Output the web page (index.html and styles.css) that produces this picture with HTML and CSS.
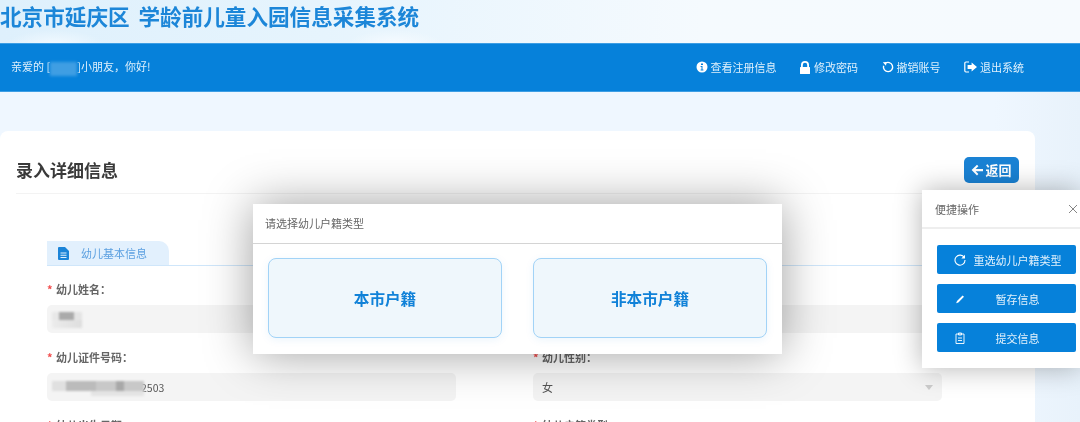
FILE: index.html
```html
<!DOCTYPE html>
<html lang="zh-CN">
<head>
<meta charset="utf-8">
<title>北京市延庆区 学龄前儿童入园信息采集系统</title>
<link rel="stylesheet" href="styles.css">
</head>
<body>
<div class="page">
  <header class="banner">
    <h1 class="banner-title">北京市延庆区 学龄前儿童入园信息采集系统</h1>
  </header>
  <nav class="bar">
    <div class="greeting">亲爱的 [<span class="mask mask-greeting"></span>]小朋友，你好!</div>
    <div class="bar-links">
      <a class="bar-link"><svg class="icon-12" viewBox="0 0 12 12"><path fill="#fff" fill-rule="evenodd" d="M6 .5a5.5 5.5 0 1 1 0 11 5.5 5.5 0 0 1 0-11zM5 2.400v1.600h2V2.400zM4.600 5v1h.9v2.400h-.9v1h2.800v-1h-.9V5z"/></svg>查看注册信息</a>
      <a class="bar-link bar-link-wide"><svg class="icon-10" viewBox="0 0 10 13"><path fill="#fff" d="M1 6V4a4 4 0 0 1 8 0v2h.4a.6.6 0 0 1 .6.6v5.800a.6.6 0 0 1-.6.6H.6a.6.6 0 0 1-.6-.6V6.600A.6.6 0 0 1 .6 6zm1.800 0h4.400V4a2.200 2.200 0 0 0-4.400 0z"/></svg>修改密码</a>
      <a class="bar-link"><svg class="icon-12" viewBox="0 0 12 12"><path fill="none" stroke="#fff" stroke-width="1.400" d="M3.200 2.400a4.600 4.600 0 1 1-1.600 2.400"/><path fill="#fff" d="M.8 1.200 4.600 1 4 4.800z"/></svg>撤销账号</a>
      <a class="bar-link"><svg class="icon-13" viewBox="0 0 13 12"><path fill="none" stroke="#fff" stroke-width="1.200" d="M5 1H2a1.200 1.200 0 0 0-1.200 1.200v7.600A1.200 1.200 0 0 0 2 11h3"/><path fill="#fff" d="M7.600 1.600 13 6l-5.400 4.400V8H3.600V4h4z"/></svg>退出系统</a>
    </div>
  </nav>
  <main class="content">
    <section class="card">
      <div class="card-head">
        <h2 class="card-title">录入详细信息</h2>
        <button class="back-btn"><svg class="back-icon" viewBox="0 0 12 12"><path fill="#fff" d="M6 .8 7.400 2.200 4.600 5H12v2.200H4.600l2.800 2.800L6 11.400.6 6z"/></svg>返回</button>
      </div>
      <div class="tabs">
        <div class="tab"><svg class="tab-icon" viewBox="0 0 11 13"><path fill="#1b84d8" fill-rule="evenodd" d="M1 0h6l4 4v8a1 1 0 0 1-1 1H1a1 1 0 0 1-1-1V1a1 1 0 0 1 1-1zm1.500 5.500v1h6v-1zm0 2.200v1h6v-1zm0 2.200v1h6v-1z"/></svg>幼儿基本信息</div>
      </div>
      <div class="form">
        <div class="field">
          <label class="label">幼儿姓名：</label>
          <div class="input"><span class="mask mask-name"></span></div>
        </div>
        <div class="field">
          <label class="label label-empty"></label>
          <div class="input"></div>
        </div>
        <div class="field">
          <label class="label">幼儿证件号码：</label>
          <div class="input input-id"><span class="mask mask-id"></span>2503</div>
        </div>
        <div class="field">
          <label class="label">幼儿性别：</label>
          <div class="input input-select">女<span class="caret"></span></div>
        </div>
        <div class="field">
          <label class="label">幼儿出生日期</label>
        </div>
        <div class="field">
          <label class="label">幼儿户籍类型</label>
        </div>
      </div>
    </section>
  </main>

  <div class="dialog">
    <div class="dialog-head">请选择幼儿户籍类型</div>
    <div class="dialog-body">
      <div class="choice">本市户籍</div>
      <div class="choice">非本市户籍</div>
    </div>
  </div>

  <aside class="quick">
    <div class="quick-head">便捷操作<svg class="quick-close" viewBox="0 0 10 10"><path fill="none" stroke="#777" stroke-width=".9" d="M1 1l8 8M9 1l-8 8"/></svg></div>
    <div class="quick-body">
      <button class="quick-btn"><svg class="quick-icon" viewBox="0 0 12 12"><path fill="none" stroke="#fff" stroke-width="1.100" d="M10.300 3.600A5 5 0 1 0 11 6"/><path fill="#fff" d="M11 .8v3.700H7.300z"/></svg><span class="quick-label">重选幼儿户籍类型</span></button>
      <button class="quick-btn"><svg class="quick-icon" viewBox="0 0 12 12"><path fill="#fff" d="M8.600 2.400l1.400 1.400-5.600 5.600-2.200.8.800-2.200z"/></svg><span class="quick-label">暂存信息</span></button>
      <button class="quick-btn"><svg class="quick-icon" viewBox="0 0 12 12"><path fill="none" stroke="#fff" stroke-width=".9" d="M2 2h8v9.500H2zM4.500 1h3v2h-3zM4 6h4M4 8.500h4"/></svg><span class="quick-label">提交信息</span></button>
    </div>
  </aside>
</div>
</body>
</html>
```
FILE: styles.css
```css
* { box-sizing: border-box; }
html, body { margin: 0; padding: 0; }
body {
  font-family: "Noto Sans CJK SC", "Noto Sans", sans-serif;
  font-size: 11px;
  color: #555;
}
.page {
  position: relative;
  width: 1080px;
  height: 422px;
  overflow: hidden;
  background: linear-gradient(90deg, #eff7ff 0%, #eff7ff 92%, #e8f2fb 100%);
  filter: blur(0.45px);
}
.banner {
  height: 43px;
  padding-top: 1px;
  background:
    radial-gradient(ellipse 48px 14px at 55px 44px, #f1f9ff 0%, transparent 100%),
    radial-gradient(ellipse 48px 14px at 395px 44px, #f6fbff 0%, transparent 100%),
    linear-gradient(90deg, #def0fc 0%, #e6f4fd 30%, #f5fafe 65%, #f6fafe 100%);
}
.banner-title {
  margin: 0;
  font-size: 21.6px;
  line-height: 30px;
  font-weight: 700;
  word-spacing: 4px;
  color: #1c86d8;
  white-space: nowrap;
}
.bar {
  height: 49px;
  display: flex;
  align-items: center;
  justify-content: space-between;
  padding: 0 56px 1px 11px;
  background: #0681da;
  border-top: 1px solid #3d9ee4;
  border-bottom: 1px solid #3d9ee4;
  color: #dff0fc;
}
.greeting { white-space: nowrap; }
.mask { display: inline-block; vertical-align: middle; }
.mask-greeting {
  width: 27px;
  height: 14px;
  background: #3f9ee3;
  filter: blur(1.5px);
}
.bar-links { display: flex; align-items: center; gap: 23.5px; }
.bar-link { display: flex; align-items: center; gap: 3px; white-space: nowrap; }
.bar-link-wide { gap: 4px; }
.icon-12 { width: 12px; height: 12px; }
.icon-10 { width: 10px; height: 13px; }
.icon-13 { width: 13px; height: 12px; }
.content { padding-top: 39px; }
.card {
  width: 1035px;
  height: 320px;
  padding: 0 16px;
  background: #fff;
  border-radius: 8px 8px 0 0;
}
.card-head {
  height: 63px;
  padding-top: 15px;
  display: flex;
  align-items: center;
  justify-content: space-between;
  border-bottom: 1px solid #f3f3f3;
}
.card-title {
  margin: 0;
  font-size: 17px;
  font-weight: 700;
  color: #3a3a3a;
}
.back-btn {
  display: flex;
  align-items: center;
  justify-content: center;
  gap: 2px;
  width: 55px;
  height: 26px;
  padding: 0;
  border: 0;
  border-radius: 5px;
  background: #1a82d4;
  color: #fff;
  font: 700 13px "Noto Sans CJK SC", sans-serif;
}
.back-icon { width: 12px; height: 12px; }
.tabs {
  margin: 47px 0 0 31px;
  height: 25px;
  border-bottom: 1px solid #cfe6fa;
}
.tab {
  display: flex;
  align-items: center;
  gap: 12px;
  width: 122px;
  height: 24px;
  padding-left: 11px;
  background: #e2f0fd;
  border-radius: 0 10px 0 0;
  color: #5a9fe0;
}
.tab-icon { width: 11px; height: 13px; }
.form {
  display: grid;
  grid-template-columns: 409px 409px;
  column-gap: 77px;
  row-gap: 16px;
  margin: 15px 0 0 31px;
}
.field { display: flex; flex-direction: column; gap: 8px; }
.label {
  position: relative;
  height: 16px;
  line-height: 16px;
  padding-left: 9px;
  font-weight: 700;
  color: #666;
}
.label::before {
  content: "*";
  position: absolute;
  left: 0;
  top: 0;
  color: #f24d4d;
}
.label-empty::before { content: ""; }
.input {
  display: flex;
  align-items: center;
  height: 28px;
  padding: 0 5px;
  background: #f4f4f4;
  border-radius: 5px;
  color: #555;
}
.input-id { font-size: 10.5px; }
.input-select { justify-content: space-between; padding: 0 9px; }
.caret {
  width: 0;
  height: 0;
  border-left: 4px solid transparent;
  border-right: 4px solid transparent;
  border-top: 5px solid #ccc;
}
.mask-name {
  width: 30px;
  height: 16px;
  margin-top: 1px;
  background:
    linear-gradient(90deg, #e8e8e8 0 25%, #aaa 25% 75%, #e4e4e4 75%) 0 0 / 100% 50% no-repeat,
    linear-gradient(90deg, #ececec, #dedede) 0 100% / 100% 50% no-repeat;
  filter: blur(1.2px);
}
.mask-id {
  width: 92px;
  height: 15px;
  margin: 2px -3px 0 0;
  background:
    linear-gradient(90deg, #e0e0e0 0 15%, #bbb 15% 48%, #c8c8c8 48% 70%, #a8a8a8 70% 78%, #c8c8c8 78%) 0 0 / 100% 10px no-repeat,
    linear-gradient(90deg, transparent 0 42%, #e4e4e4 42%) 0 100% / 100% 5px no-repeat;
  filter: blur(1.2px);
}
.dialog {
  position: absolute;
  left: 253px;
  top: 204px;
  width: 529px;
  height: 150px;
  background: #fff;
  box-shadow: 0 0 45px rgba(0, 0, 0, 0.38);
}
.dialog-head {
  height: 40px;
  padding: 0 12px 1px;
  display: flex;
  align-items: center;
  border-bottom: 1px solid #d4d4d4;
  color: #666;
}
.dialog-body { display: flex; gap: 31px; padding: 14px 15px 16px; }
.choice {
  display: flex;
  align-items: center;
  justify-content: center;
  width: 234px;
  height: 80px;
  background: #eff7fc;
  border: 1px solid #a2d3f7;
  border-radius: 8px;
  box-shadow: 0 2px 8px rgba(6, 129, 218, 0.08);
  color: #1182d8;
  font-size: 15.6px;
  font-weight: 700;
}
.quick {
  position: absolute;
  left: 922px;
  top: 190px;
  width: 158px;
  height: 178px;
  background: #fff;
  box-shadow: 0 0 26px rgba(0, 0, 0, 0.3);
}
.quick-head {
  height: 39px;
  display: flex;
  align-items: center;
  justify-content: space-between;
  padding: 0 2px 0 13px;
  border-bottom: 2px solid #eee;
  color: #666;
}
.quick-close { width: 10px; height: 10px; }
.quick-body {
  display: flex;
  flex-direction: column;
  gap: 10px;
  padding: 16px 4px 16px 15px;
}
.quick-btn {
  display: flex;
  align-items: center;
  height: 29px;
  padding: 0 7px 0 17px;
  border: 0;
  border-radius: 2px;
  background: #0681da;
  color: #e4f2fc;
  font: 11px "Noto Sans CJK SC", sans-serif;
}
.quick-icon { width: 12px; height: 12px; flex: none; }
.quick-label { flex: 1; text-align: center; white-space: nowrap; }
```
